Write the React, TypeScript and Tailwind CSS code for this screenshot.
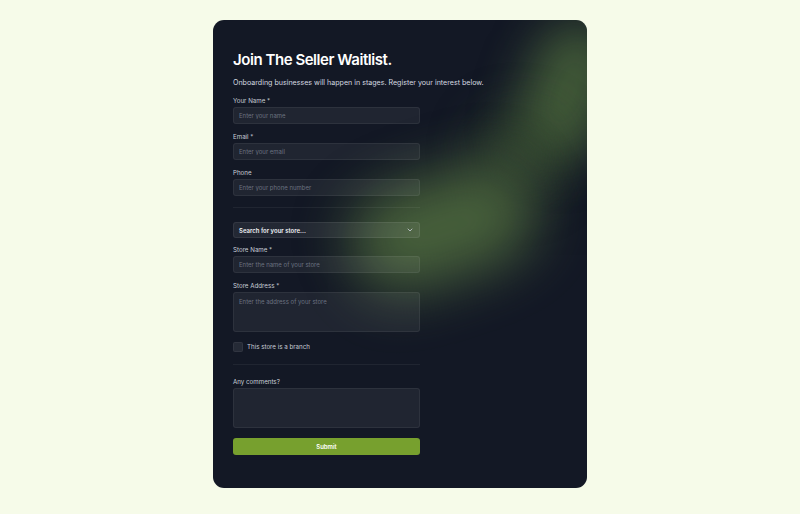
import { ChevronDown } from "lucide-react";

const font = { fontFamily: "Inter, 'Noto Sans', sans-serif" };

function Label({ children }: { children: React.ReactNode }) {
  return <label className="mb-[2px] block text-[6.2px] leading-[8px] text-[#c9ced6]">{children}</label>;
}

function Field({ label, placeholder }: { label: string; placeholder: string }) {
  return (
    <div>
      <Label>{label}</Label>
      <input
        placeholder={placeholder}
        className="block h-[17px] w-full rounded-[3px] border border-white/[0.06] bg-white/[0.06] px-[5px] text-[6px] text-white outline-none placeholder:text-[#6b7280]"
      />
    </div>
  );
}

function Area({ label, placeholder }: { label: string; placeholder?: string }) {
  return (
    <div>
      <Label>{label}</Label>
      <textarea
        placeholder={placeholder}
        className="block h-[40px] w-full resize-none rounded-[3px] border border-white/[0.06] bg-white/[0.06] px-[5px] py-[4px] text-[6px] text-white outline-none placeholder:text-[#6b7280]"
      />
    </div>
  );
}

export default function App() {
  return (
    <div className="flex min-h-screen justify-center bg-[#f6fbe9] pt-[20px]" style={font}>
      <div className="relative h-[468px] w-[374px] overflow-hidden rounded-[11px] bg-[#131825] px-[20px] pt-[31px]">
        {/* green glow */}
        <div className="pointer-events-none absolute left-[312px] top-[0px] h-[145px] w-[85px] rotate-[20deg] rounded-full bg-[#46603a] opacity-90 blur-[24px]" />
        <div className="pointer-events-none absolute left-[265px] top-[95px] h-[80px] w-[80px] rounded-full bg-[#3f5734] opacity-60 blur-[26px]" />
        <div className="pointer-events-none absolute left-[135px] top-[155px] h-[105px] w-[190px] rotate-[-18deg] rounded-full bg-[#4a643c] opacity-95 blur-[28px]" />

        <div className="relative w-[187px]">
          <h1 className="w-[300px] text-[15px] font-semibold leading-[18px] tracking-[-0.03em] text-white">
            Join The Seller Waitlist.
          </h1>
          <p className="mt-[9px] w-[300px] text-[7.1px] leading-[10px] text-[#d6dae0]">
            Onboarding businesses will happen in stages. Register your interest below.
          </p>

          <div className="mt-[9px] flex flex-col gap-[9px]">
            <Field label="Your Name *" placeholder="Enter your name" />
            <Field label="Email *" placeholder="Enter your email" />
            <Field label="Phone" placeholder="Enter your phone number" />
          </div>

          <div className="mt-[11px] h-px bg-white/[0.06]" />

          <button className="mt-[14px] flex h-[16px] w-full items-center justify-between rounded-[3px] border border-white/[0.07] bg-white/[0.07] px-[5px] text-[6px] font-semibold text-[#eef0f3]">
            <span>Search for your store...</span>
            <ChevronDown className="h-[8px] w-[8px] text-[#c7ccd4]" strokeWidth={2.5} />
          </button>

          <div className="mt-[8px] flex flex-col gap-[9px]">
            <Field label="Store Name *" placeholder="Enter the name of your store" />
            <Area label="Store Address *" placeholder="Enter the address of your store" />
          </div>

          <div className="mt-[10px] flex items-center gap-[4px]">
            <span className="h-[10px] w-[10px] rounded-[2px] border border-white/[0.06] bg-white/[0.08]" />
            <span className="text-[6.2px] leading-[8px] text-[#c9ced6]">This store is a branch</span>
          </div>

          <div className="mt-[12px] h-px bg-white/[0.06]" />

          <div className="mt-[13px]">
            <Area label="Any comments?" />
          </div>

          <button className="mt-[10px] h-[17px] w-full rounded-[3px] bg-[#77a02e] text-[6px] font-semibold text-white">
            Submit
          </button>
        </div>
      </div>
    </div>
  );
}
